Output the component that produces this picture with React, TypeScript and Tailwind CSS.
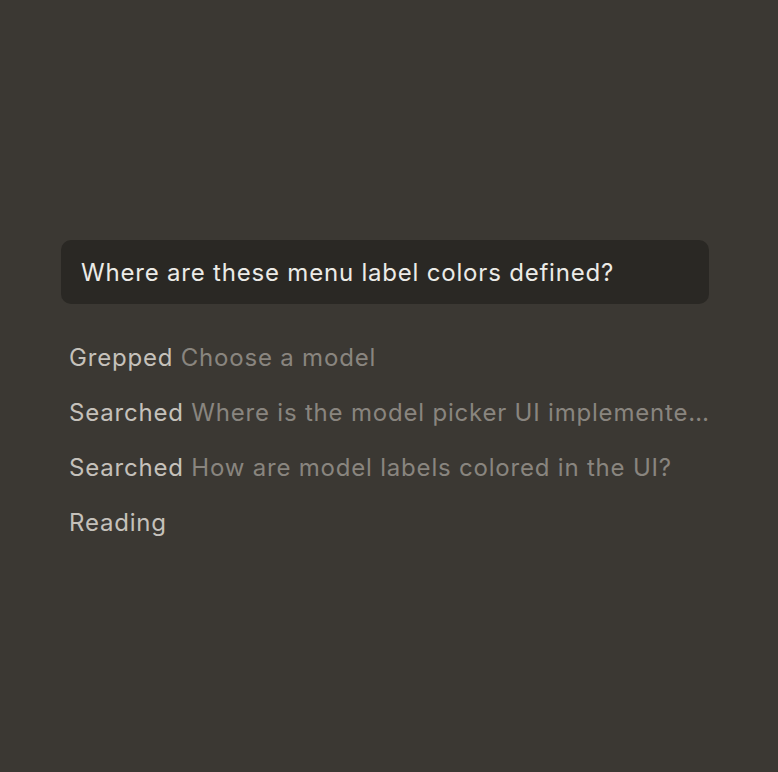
const steps = [
  { label: "Grepped", detail: "Choose a model" },
  { label: "Searched", detail: "Where is the model picker UI implemented and how are colors applied?" },
  { label: "Searched", detail: "How are model labels colored in the UI?" },
  { label: "Reading", detail: "" },
];

export default function App() {
  return (
    <div
      className="w-[778px] h-[772px] bg-[#3b3833] pt-[240px] pl-[61px]"
      style={{ fontFamily: "Inter, 'Noto Sans', sans-serif" }}
    >
      <div className="w-[648px]">
        <div className="h-[64px] rounded-[10px] bg-[#2a2824] px-5 flex items-center">
          <span className="text-[24px] text-[#ecebe7] tracking-[0.8px] pt-[2px]">
            Where are these menu label colors defined?
          </span>
        </div>
        <div className="mt-[39px] flex flex-col gap-[25px] pl-2">
          {steps.map((s, i) => (
            <div
              key={i}
              className="h-[30px] text-[24px] leading-[30px] tracking-[0.8px] truncate text-[#89857f]"
            >
              <span className="text-[#c5c1bb]">{s.label}</span>
              {s.detail && <span> {s.detail}</span>}
            </div>
          ))}
        </div>
      </div>
    </div>
  );
}
